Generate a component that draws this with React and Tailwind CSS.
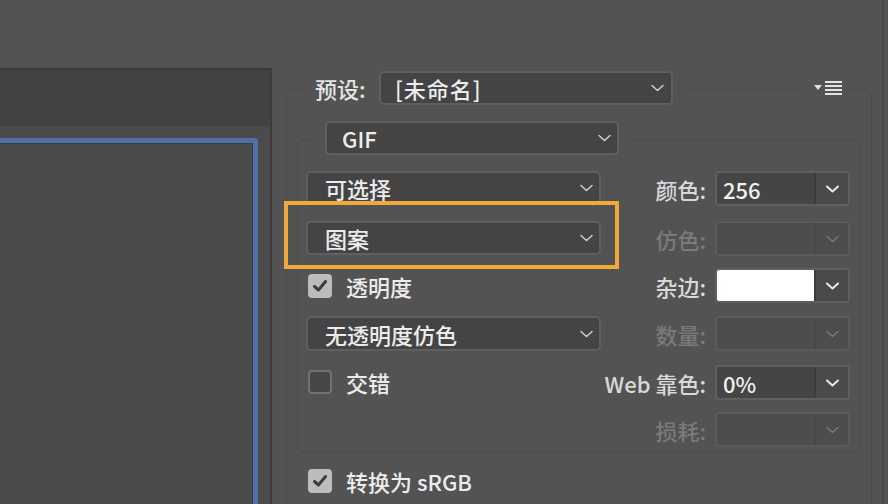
import React from "react";

const FONT = { fontFamily: '"Noto Sans CJK SC", "Noto Sans", sans-serif' };

function Chevron({ color = "#cfcfcf", w = 13, sw = 1.5 }) {
  return (
    <svg width={w} height="8" viewBox="0 0 13 8" fill="none">
      <polyline points="1,1.5 6.5,6.5 12,1.5" stroke={color} strokeWidth={sw} strokeLinecap="round" strokeLinejoin="round" />
    </svg>
  );
}

function Dropdown({ text, w = "w-[295px]", h = "h-[34px]", pl = "pl-[17px]" }) {
  return (
    <div className={`${w} ${h} ${pl} pr-[6px] shrink-0 flex items-center justify-between rounded-[5px] border-2 border-[#5f5f5f] bg-[#444444]`}>
      <span className="text-[22px] font-medium leading-none text-[#ececec]">{text}</span>
      <Chevron />
    </div>
  );
}

function Combo({ label, value, disabled, white }) {
  return (
    <div className="h-[35px] flex items-center gap-[9px]">
      <span className={`text-[22px] font-medium leading-none ${disabled ? "text-[#7a7a7a]" : "text-[#d9d9d9]"}`}>{label}</span>
      <div className={`w-[135px] h-[35px] flex rounded-[4px] border-2 overflow-hidden ${disabled ? "border-[#5b5b5b] bg-[#4d4d4d]" : "border-[#5f5f5f] bg-[#454545]"}`}>
        <div className={`w-[97px] h-full flex items-center pl-[6px] ${white ? "bg-white" : ""}`}>
          <span className="text-[22px] font-medium leading-none text-[#f0f0f0]">{value}</span>
        </div>
        <div className={`w-[2px] h-full ${disabled ? "bg-[#474747]" : "bg-[#3c3c3c]"}`} />
        <div className={`flex-1 h-full flex items-center justify-center ${disabled ? "bg-[#4d4d4d]" : "bg-[#4a4a4a]"}`}>
          <Chevron color={disabled ? "#7a7a7a" : "#e8e8e8"} sw={disabled ? 1.5 : 2} />
        </div>
      </div>
    </div>
  );
}

function Checkbox({ checked, label }) {
  return (
    <div className="h-[24px] flex items-center gap-[14px] ml-[2px]">
      {checked ? (
        <div className="w-[24px] h-[24px] rounded-[4px] bg-[#bcbcbc] flex items-center justify-center">
          <svg width="18" height="18" viewBox="0 0 18 18" fill="none">
            <polyline points="3.5,9.5 7.5,13 14.5,4.5" stroke="#3d3d3d" strokeWidth="3" strokeLinecap="round" strokeLinejoin="round" />
          </svg>
        </div>
      ) : (
        <div className="w-[24px] h-[24px] rounded-[4px] border-2 border-[#727272] bg-[#474747]" />
      )}
      <span className="text-[22px] font-medium leading-none text-[#ececec]">{label}</span>
    </div>
  );
}

export default function App() {
  return (
    <div className="w-[888px] h-[504px] overflow-hidden bg-[#535353] flex" style={FONT}>
      {/* left panel */}
      <div className="w-[272px] shrink-0 mt-[68px] flex flex-col overflow-hidden border-t-2 border-r-2 border-[#3b3b3b]">
        <div className="h-[56px] shrink-0 bg-[#424242]" />
        <div className="flex-1 min-h-0 bg-[#4b4b4b] pt-[12px] pr-[12px]">
          <div className="-ml-[10px] h-[420px] rounded-[4px] border-[5px] border-[#4e72a5] shadow-[inset_0_0_0_1px_#3d3d3d]" />
        </div>
      </div>

      {/* right settings area */}
      <div className="flex-1 flex">
        <div className="ml-[14px] mt-[89px] w-[586px] h-[440px] shrink-0 border border-[#4b4b4b] rounded-[7px] flex flex-col">
          {/* preset row */}
          <div className="-mt-[19px] h-[34px] flex items-center">
            <div className="ml-[19px] h-full bg-[#535353] pl-[9px] pr-[11px] flex items-center">
              <span className="w-[64px] text-[22px] font-medium leading-none text-[#e4e4e4]">预设:</span>
              <div className="w-[294px] h-[34px] pl-[14px] pr-[7px] flex items-center justify-between rounded-[5px] border-2 border-[#5f5f5f] bg-[#444444]">
                <span className="text-[22px] font-medium leading-none text-[#ececec] tracking-[1px]">[未命名]</span>
                <Chevron />
              </div>
            </div>
            <div className="flex-1" />
            <div className="h-full bg-[#535353] pl-[9px] pr-[3px] flex items-center">
              <svg width="28" height="14" viewBox="0 0 28 14">
                <polygon points="0,4 8,4 4,9" fill="#e2e2e2" />
                <rect x="11" y="0" width="17" height="2" fill="#e2e2e2" />
                <rect x="11" y="4" width="17" height="2" fill="#e2e2e2" />
                <rect x="11" y="8" width="17" height="2" fill="#e2e2e2" />
                <rect x="11" y="12" width="17" height="2" fill="#e2e2e2" />
              </svg>
            </div>
            <div className="w-[26px]" />
          </div>

          {/* inner frame */}
          <div className="ml-[10px] mt-[34px] w-[564px] border border-[#4b4b4b] rounded-[7px] pb-[5px] flex flex-col">
            <div className="-mt-[19px] h-[34px] flex">
              <div className="ml-[18px] h-full bg-[#535353] pl-[9px] pr-[10px] flex items-center">
                <Dropdown text="GIF" w="w-[294px]" pl="pl-[15px]" />
              </div>
            </div>

            <div className="mt-[16px] pl-[8px] pr-[10px] flex">
              {/* left column */}
              <div className="w-[295px] flex flex-col">
                <Dropdown text="可选择" />
                <div className="mt-[16px] relative">
                  <div className="absolute -left-[22px] -top-[20px] w-[335px] h-[68px] border-4 border-[#f2a93b] pointer-events-none" />
                  <Dropdown text="图案" />
                </div>
                <div className="mt-[19px]">
                  <Checkbox checked label="透明度" />
                </div>
                <div className="mt-[18px]">
                  <Dropdown text="无透明度仿色" h="h-[35px]" />
                </div>
                <div className="mt-[19px]">
                  <Checkbox label="交错" />
                </div>
              </div>

              {/* right column */}
              <div className="flex-1 flex flex-col items-end">
                <Combo label="颜色:" value="256" />
                <div className="mt-[15px]"><Combo label="仿色:" disabled /></div>
                <div className="mt-[12px]"><Combo label="杂边:" white /></div>
                <div className="mt-[13px]"><Combo label="数量:" disabled /></div>
                <div className="mt-[14px]"><Combo label="Web 靠色:" value="0%" /></div>
                <div className="mt-[12px]"><Combo label="损耗:" disabled /></div>
              </div>
            </div>
          </div>

          <div className="mt-[16px] ml-[19px]">
            <Checkbox checked label="转换为 sRGB" />
          </div>
        </div>
        <div className="flex-1" />
        <div className="w-[2px] bg-[#484848]" />
        <div className="w-[4px]" />
      </div>
    </div>
  );
}
